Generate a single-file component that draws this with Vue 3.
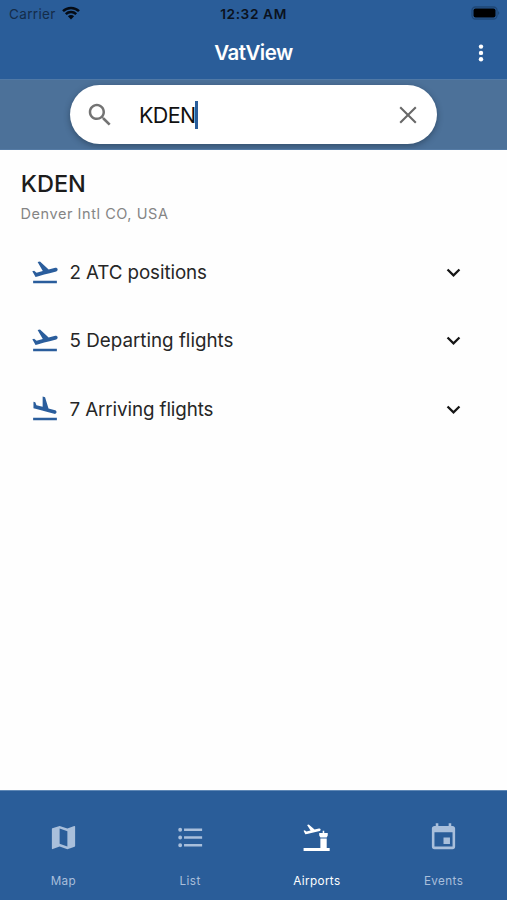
<script setup>
const takeoff = 'M2.5,19H21.5V21H2.5V19M22.07,9.64C21.86,8.84 21.03,8.36 20.23,8.58L14.92,10L8,3.57L6.09,4.08L10.23,11.25L5.26,12.58L3.29,11.04L1.84,11.43L3.66,14.59L4.43,15.92L6.03,15.5L11.34,14.07L15.69,12.91L21,11.5C21.81,11.26 22.28,10.44 22.07,9.64Z'
const landing = 'M2.5,19H21.5V21H2.5V19M9.68,13.27L14.03,14.43L19.34,15.85C20.14,16.06 20.96,15.59 21.18,14.79C21.39,14 20.92,13.17 20.12,12.95L14.81,11.53L12.05,2.5L10.12,2V10.28L5.15,8.95L4.22,6.63L2.77,6.24V11.41L4.37,11.84L9.68,13.27Z'

const rows = [
  { label: '2 ATC positions', icon: takeoff, cls: 'atc' },
  { label: '5 Departing flights', icon: takeoff, cls: 'dep' },
  { label: '7 Arriving flights', icon: landing, cls: 'arr' },
]

const tabs = [
  {
    label: 'Map',
    icon: 'M15,19L9,16.89V5L15,7.11M20.5,3C20.44,3 20.39,3 20.34,3L15,5.1L9,3L3.36,4.9C3.15,4.97 3,5.15 3,5.38V20.5A0.5,0.5 0 0,0 3.5,21C3.55,21 3.61,21 3.66,20.97L9,18.9L15,21L20.64,19.1C20.85,19 21,18.85 21,18.62V3.5A0.5,0.5 0 0,0 20.5,3Z',
  },
  {
    label: 'List',
    icon: 'M7,5H21V7H7V5M7,13V11H21V13H7M4,4.5A1.5,1.5 0 0,1 5.5,6A1.5,1.5 0 0,1 4,7.5A1.5,1.5 0 0,1 2.5,6A1.5,1.5 0 0,1 4,4.5M4,10.5A1.5,1.5 0 0,1 5.5,12A1.5,1.5 0 0,1 4,13.5A1.5,1.5 0 0,1 2.5,12A1.5,1.5 0 0,1 4,10.5M7,19V17H21V19H7M4,16.5A1.5,1.5 0 0,1 5.5,18A1.5,1.5 0 0,1 4,19.5A1.5,1.5 0 0,1 2.5,18A1.5,1.5 0 0,1 4,16.5Z',
  },
  {
    label: 'Airports',
    active: true,
    icon: 'M2,20.2H15V12.7H19.9V20.2H22.2V22.4H2Z M15,12L14.1,10.4V8.5H16.8V6.8H18V8.5H20.7V10.4L19.9,12Z M15.15,5.6C15,5.1 14.5,4.8 13.9,5L10.5,5.9L6,2L4.7,2.4L7.4,6.6L4.2,7.4L2.9,6.4L2,6.7L3.3,9.4L4.7,9.3L14.5,6.9C15,6.7 15.3,6.1 15.15,5.6Z',
  },
  {
    label: 'Events',
    icon: 'M19,19H5V8H19M16,1V3H8V1H6V3H5C3.89,3 3,3.89 3,5V19A2,2 0 0,0 5,21H19A2,2 0 0,0 21,19V5C21,3.89 20.1,3 19,3H18V1M17,12H12V17H17V12Z',
  },
]
</script>

<template>
  <div class="screen">
    <header class="header">
      <div class="status">
        <div class="carrier">
          <span class="carrier-name">Carrier</span>
          <svg class="wifi" viewBox="0 0 18 14">
            <path d="M1 5.2A11.5 11.5 0 0 1 17 5.2" />
            <path d="M3.8 8.2A7.5 7.5 0 0 1 14.2 8.2" />
            <path class="fill" d="M9 13.4L5.9 10.2A4.4 4.4 0 0 1 12.1 10.2Z" />
          </svg>
        </div>
        <span class="clock">12:32 AM</span>
        <div class="power">
          <svg class="battery" viewBox="0 0 30 14">
            <rect class="case" x="1" y="1" width="25" height="12" rx="3.5" />
            <rect x="2.5" y="2.6" width="22" height="8.8" rx="2" />
            <path class="cap" d="M27.3 5A2.6 2.6 0 0 1 27.3 9Z" />
          </svg>
        </div>
      </div>
      <div class="titlebar">
        <h1 class="title">VatView</h1>
        <svg class="more" viewBox="0 0 6 18">
          <circle cx="3" cy="2.6" r="2.2" />
          <circle cx="3" cy="8.9" r="2.2" />
          <circle cx="3" cy="15.2" r="2.2" />
        </svg>
      </div>
    </header>

    <div class="searchbar">
      <div class="pill">
        <svg class="search-icon" viewBox="0 0 24 24">
          <path d="M15.5 14h-.79l-.28-.27C15.41 12.59 16 11.11 16 9.5 16 5.91 13.09 3 9.5 3S3 5.91 3 9.5 5.91 16 9.5 16c1.61 0 3.09-.59 4.23-1.57l.27.28v.79l5 4.99L20.49 19l-4.99-5zm-6 0C7.01 14 5 11.99 5 9.5S7.01 5 9.5 5 14 7.01 14 9.5 11.99 14 9.5 14z" />
        </svg>
        <span class="query">KDEN</span>
        <span class="caret"></span>
        <svg class="clear" viewBox="0 0 18 18"><path d="M1.2 1.2L16.8 16.8M16.8 1.2L1.2 16.8" /></svg>
      </div>
    </div>

    <main class="content">
      <h2 class="code">KDEN</h2>
      <p class="place">Denver Intl CO, USA</p>
      <div class="rows">
        <div v-for="row in rows" :key="row.label" class="row">
          <svg class="plane" viewBox="0 0 24 24"><path :d="row.icon" /></svg>
          <span class="row-label" :class="row.cls">{{ row.label }}</span>
          <svg class="chevron" viewBox="0 0 24 24"><path d="M7.41,8.58L12,13.17L16.59,8.58L18,10L12,16L6,10L7.41,8.58Z" /></svg>
        </div>
      </div>
    </main>

    <nav class="tabs">
      <div v-for="tab in tabs" :key="tab.label" class="tab" :class="{ active: tab.active }">
        <svg class="tab-icon" viewBox="0 0 24 24"><path :d="tab.icon" /></svg>
        <span class="tab-label">{{ tab.label }}</span>
      </div>
    </nav>
  </div>
</template>

<style>
body {
  margin: 0;
  background: #fff;
}
</style>

<style scoped>
.screen {
  width: 507px;
  height: 900px;
  display: flex;
  flex-direction: column;
  overflow: hidden;
  background: #fefefe;
  font-family: Inter, "Liberation Sans", sans-serif;
}
svg {
  display: block;
  flex: none;
}
.header {
  height: 79px;
  box-sizing: border-box;
  flex: none;
  background: #2a5d99;
}
.status {
  height: 27px;
  display: grid;
  grid-template-columns: 1fr auto 1fr;
  align-items: center;
  padding: 0 7px 0 9px;
  color: #0a121e;
}
.carrier {
  display: flex;
  align-items: center;
  gap: 6px;
}
.carrier-name {
  font-size: 13.5px;
  letter-spacing: 0.35px;
  color: #142c49;
}
.wifi {
  width: 18px;
  height: 14px;
  margin-bottom: 1px;
  fill: none;
  stroke: #050b14;
  stroke-width: 2.5;
}
.wifi .fill {
  fill: #050b14;
  stroke: none;
}
.clock {
  margin-left: -1px;
  font-size: 13.7px;
  font-weight: 600;
  letter-spacing: 0.6px;
  margin-right: 1px;
}
.power {
  display: flex;
  justify-content: flex-end;
}
.battery {
  width: 30px;
  height: 14px;
  margin: 0 -1px 1px 0;
  fill: #000;
}
.battery .case {
  fill: none;
  stroke: #1f4776;
  stroke-width: 1.3;
}
.battery .cap {
  fill: #1b4068;
}
.titlebar {
  height: 51px;
  display: grid;
  grid-template-columns: 1fr auto 1fr;
  align-items: center;
}
.title {
  grid-column: 2;
  margin: 0;
  color: #fff;
  font-size: 20.5px;
  font-weight: 600;
  letter-spacing: -0.5px;
  line-height: 28px;
}
.more {
  justify-self: end;
  width: 6px;
  height: 18px;
  margin-right: 23px;
  fill: #fff;
}
.searchbar {
  height: 71px;
  box-sizing: border-box;
  flex: none;
  display: flex;
  justify-content: center;
  padding-top: 6px;
  overflow: hidden;
  border-top: 1px solid #5079a6;
  border-bottom: 1px solid #557ba5;
  background: #4c7199;
}
.pill {
  width: 367px;
  height: 59px;
  box-sizing: border-box;
  display: flex;
  align-items: center;
  padding: 0 20px 0 15px;
  margin-top: -1px;
  border-radius: 30px;
  background: #fff;
  box-shadow: 0 2px 6px rgba(20, 35, 50, 0.45);
}
.search-icon {
  width: 30px;
  height: 30px;
  fill: #737373;
}
.query {
  width: 56px;
  margin-left: 24px;
  font-size: 21.5px;
  letter-spacing: -0.6px;
  color: #111;
  white-space: nowrap;
}
.caret {
  width: 2.5px;
  height: 28px;
  background: #2a5d99;
}
.clear {
  width: 18px;
  height: 18px;
  margin-left: auto;
  fill: none;
  stroke: #686868;
  stroke-width: 2.1;
}
.content {
  flex: 1;
  min-height: 0;
  padding: 18px 0 0 20px;
}
.code {
  margin: 0 0 0 0.8px;
  font-size: 23.5px;
  font-weight: 500;
  line-height: 32px;
  color: #1c1c1c;
}
.place {
  margin: 3px 0 0 0.5px;
  font-size: 14.5px;
  line-height: 22px;
  letter-spacing: 0.56px;
  color: #858585;
}
.rows {
  padding-top: 13.4px;
}
.row {
  height: 68.4px;
  display: flex;
  align-items: center;
  padding: 0 40.5px 0 10px;
}
.plane {
  width: 30px;
  height: 30px;
  margin-bottom: 1px;
  fill: #2a5d9c;
}
.row-label {
  flex: 1;
  margin-left: 9.5px;
  font-size: 18.8px;
  letter-spacing: -0.1px;
  color: #262626;
}
.row-label.dep {
  letter-spacing: 0;
}
.chevron {
  width: 27px;
  height: 27px;
  fill: #151515;
}
.tabs {
  height: 109px;
  flex: none;
  display: grid;
  grid-template-columns: repeat(4, 1fr);
  background: #2a5d99;
  border-top: 1px solid #5f88b6;
}
.tab {
  display: flex;
  flex-direction: column;
  align-items: center;
  padding-top: 31px;
  color: #a9bfdb;
}
.tab.active {
  color: #fff;
}
.tab-icon {
  width: 31px;
  height: 31px;
  fill: currentColor;
}
.tab-label {
  margin-top: 20px;
  font-size: 11.7px;
  line-height: 16px;
  letter-spacing: 0.4px;
}
</style>
